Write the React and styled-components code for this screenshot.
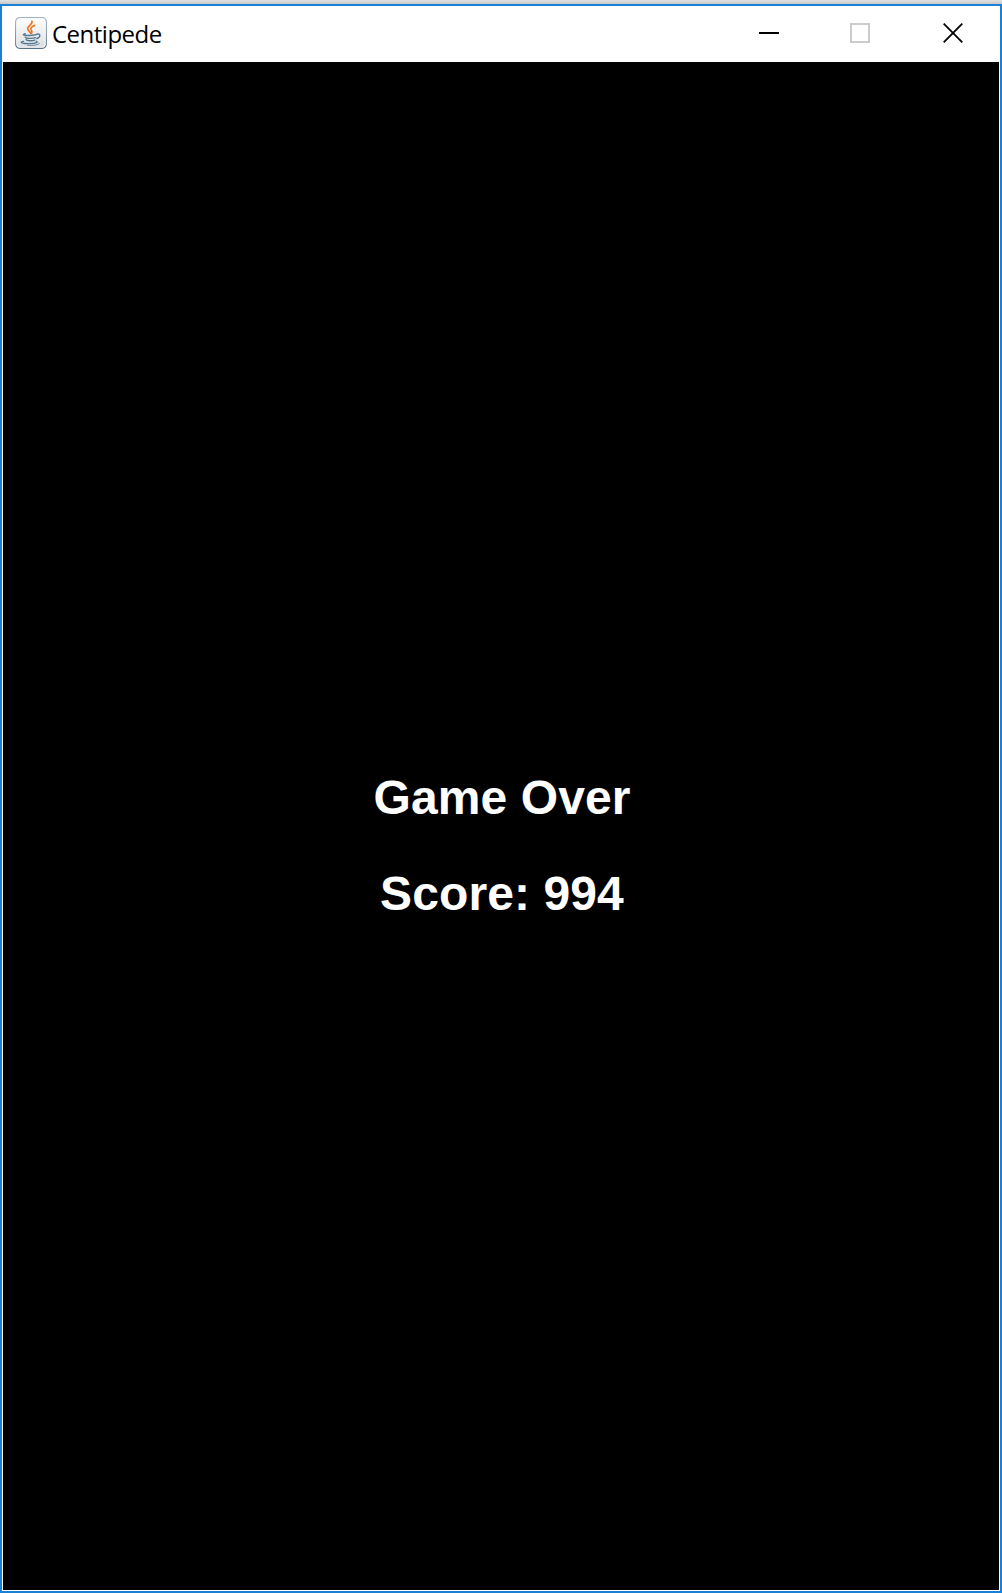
import React from "react";
import styled, { createGlobalStyle } from "styled-components";

const GlobalStyle = createGlobalStyle`
  html, body { margin: 0; background: #dcdcdc; }
  * { box-sizing: border-box; }
`;

const Desktop = styled.div`
  width: 1002px;
  height: 1593px;
  padding-top: 4px;
  overflow: hidden;
  background: linear-gradient(#e2e2e2, #c8c8c8 4px);
`;

const Window = styled.main`
  display: flex;
  flex-direction: column;
  height: 1589px;
  border: 2px solid #1a80d6;
  background: #fff;
`;

const TitleBar = styled.header`
  display: flex;
  align-items: center;
  flex: none;
  height: 56px;
  padding: 0 0 2px 13px;
`;

const Title = styled.h1`
  flex: 1;
  margin: 1px 0 0 5px;
  font: 400 24px/32px "Open Sans", "Noto Sans", sans-serif;
  letter-spacing: -0.5px;
  color: #000;
`;

const Controls = styled.div`
  display: flex;
  height: 54px;
`;

const ControlButton = styled.button`
  display: flex;
  align-items: center;
  justify-content: center;
  width: ${(p) => p.$width}px;
  padding: 0;
  border: 0;
  background: transparent;
  color: ${(p) => (p.disabled ? "#cccccc" : "#000")};
  svg { display: block; }
`;

const Stage = styled.section`
  flex: 1;
  display: flex;
  flex-direction: column;
  align-items: center;
  margin: 0 1px 1px;
  padding: 688px 0 0 2px;
  background: #000;
`;

const Message = styled.p`
  margin: 0;
  font: 700 48px/96px "Liberation Sans", Arial, sans-serif;
  letter-spacing: 0.1px;
  color: #fff;
  white-space: pre;
`;

function JavaIcon() {
  return (
    <svg width="32" height="32" viewBox="0 0 32 32" fill="none">
      <defs>
        <linearGradient id="face" x1="0" y1="0" x2="0" y2="1">
          <stop offset="0" stopColor="#fefefe" />
          <stop offset="1" stopColor="#dcdfe1" />
        </linearGradient>
        <linearGradient id="edge" x1="0" y1="0" x2="0" y2="1">
          <stop offset="0" stopColor="#a5b4bf" />
          <stop offset="1" stopColor="#557388" />
        </linearGradient>
      </defs>
      <rect x="0.7" y="0.7" width="30.6" height="30.6" rx="4" fill="url(#face)" stroke="url(#edge)" strokeWidth="1.2" />
      <rect x="1.8" y="1.8" width="28.4" height="28.4" rx="3" stroke="#fff" strokeOpacity="0.8" />
      <g stroke="#ee7620" strokeLinecap="round">
        <path d="M16.9 4.2c1.4 3.2-4.4 4.5-4.2 7.2.1 1.8 1.8 3 3 4.8" strokeWidth="1.7" />
        <path d="M19.7 8.4c-2.6 1-4.4 2.5-3.6 4.2.8 1.5 1.3 2.2.4 3.8" strokeWidth="1.7" />
      </g>
      <g stroke="#527891" strokeLinecap="round">
        <path d="M10.3 16.6c-2.6.7-2.4 1.4-.6 1.6 3.4.4 8.2.2 11.6-.6" strokeWidth="1.4" />
        <path d="M21.7 17.2c3.8-1 4.4 2.6.2 4.4" strokeWidth="1.4" />
        <path d="M10.2 20.1c.3 1.6 7.6 1.5 10.4.6" strokeWidth="1.4" />
        <path d="M11.2 22.5c.5 1.6 6.2 1.6 8.6.6" strokeWidth="1.4" />
        <path d="M8.6 24.3c-4 .8-2.5 1.9 1.6 2.2 4.5.4 9.5 0 11.4-.8 1-.5.5-1-.3-1.2" strokeWidth="1.3" />
        <path d="M12.6 28.3c5.4.4 10.2-.2 11.8-1.8" strokeWidth="0.9" />
      </g>
    </svg>
  );
}

export default function App() {
  return (
    <>
      <GlobalStyle />
      <Desktop>
        <Window>
          <TitleBar>
            <JavaIcon />
            <Title>Centipede</Title>
            <Controls>
              <ControlButton $width={90} aria-label="Minimize">
                <svg width="20" height="20" shapeRendering="crispEdges">
                  <rect y="9" width="20" height="2" fill="currentColor" />
                </svg>
              </ControlButton>
              <ControlButton $width={92} aria-label="Maximize" disabled>
                <svg width="20" height="20" shapeRendering="crispEdges">
                  <rect x="1" y="1" width="18" height="18" fill="none" stroke="currentColor" strokeWidth="2" />
                </svg>
              </ControlButton>
              <ControlButton $width={94} aria-label="Close">
                <svg width="20" height="20">
                  <path d="M.7.7l18.6 18.6M19.3.7L.7 19.3" stroke="currentColor" strokeWidth="1.8" />
                </svg>
              </ControlButton>
            </Controls>
          </TitleBar>
          <Stage>
            <Message>Game Over</Message>
            <Message>Score: 994</Message>
          </Stage>
        </Window>
      </Desktop>
    </>
  );
}
